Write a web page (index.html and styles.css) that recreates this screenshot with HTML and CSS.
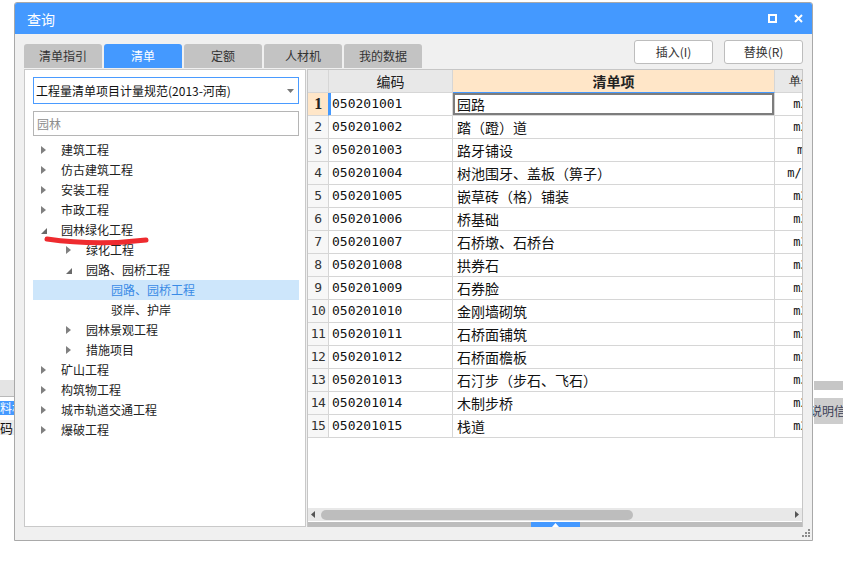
FILE: index.html
```html
<!DOCTYPE html>
<html lang="zh">
<head>
<meta charset="utf-8">
<title>查询</title>
<link rel="stylesheet" href="styles.css">
</head>
<body>
<div class="bgwin bg-left">
  <div class="bgl-bar"></div>
  <div class="bgl-tab">材料机</div>
  <div class="bgl-row">码</div>
</div>
<div class="bgwin bg-right">
  <div class="bgr-bar"></div>
  <div class="bgr-tab">说明信息</div>
</div>

<div class="window">
  <div class="titlebar">
    <span class="title">查询</span>
    <div class="tb-icons">
      <svg width="9" height="9" viewBox="0 0 9 9"><rect x="1" y="1" width="7" height="7" fill="none" stroke="#fff" stroke-width="2"/></svg>
      <svg width="9" height="9" viewBox="0 0 9 9"><path d="M1 1L8 8M8 1L1 8" stroke="#fff" stroke-width="2"/></svg>
    </div>
  </div>
  <div class="toolbar">
    <div class="tabs">
      <div class="tab">清单指引</div>
      <div class="tab active">清单</div>
      <div class="tab">定额</div>
      <div class="tab">人材机</div>
      <div class="tab">我的数据</div>
    </div>
    <div class="actions">
      <button class="btn">插入(I)</button>
      <button class="btn">替换(R)</button>
    </div>
  </div>
  <div class="main">
    <div class="leftpanel">
      <div class="select">
        <span>工程量清单项目计量规范(2013-河南)</span>
        <svg class="caret" width="7" height="4" viewBox="0 0 7 4"><path d="M0 0H7L3.5 4Z" fill="#777"/></svg>
      </div>
      <div class="search">园林</div>
      <div class="tree">
        <div class="node l0"><span class="tw closed"></span>建筑工程</div>
        <div class="node l0"><span class="tw closed"></span>仿古建筑工程</div>
        <div class="node l0"><span class="tw closed"></span>安装工程</div>
        <div class="node l0"><span class="tw closed"></span>市政工程</div>
        <div class="node l0"><span class="tw open"></span>园林绿化工程</div>
        <div class="node l1"><span class="tw closed"></span>绿化工程</div>
        <div class="node l1"><span class="tw open"></span>园路、园桥工程</div>
        <div class="node l2 selected"><span class="tw"></span>园路、园桥工程</div>
        <div class="node l2"><span class="tw"></span>驳岸、护岸</div>
        <div class="node l1"><span class="tw closed"></span>园林景观工程</div>
        <div class="node l1"><span class="tw closed"></span>措施项目</div>
        <div class="node l0"><span class="tw closed"></span>矿山工程</div>
        <div class="node l0"><span class="tw closed"></span>构筑物工程</div>
        <div class="node l0"><span class="tw closed"></span>城市轨道交通工程</div>
        <div class="node l0"><span class="tw closed"></span>爆破工程</div>
      </div>
    </div>
    <div class="grid">
      <div class="gview">
        <div class="grow head">
          <div class="c rn"></div>
          <div class="c hc">编码</div>
          <div class="c hc hname">清单项</div>
          <div class="c hc unit">单位</div>
        </div>
        <div class="grow cur">
          <div class="c rn">1</div><div class="c code">050201001</div><div class="c name sel">园路</div><div class="c unit">m2</div>
        </div>
        <div class="grow">
          <div class="c rn">2</div><div class="c code">050201002</div><div class="c name">踏（蹬）道</div><div class="c unit">m2</div>
        </div>
        <div class="grow">
          <div class="c rn">3</div><div class="c code">050201003</div><div class="c name">路牙铺设</div><div class="c unit">m</div>
        </div>
        <div class="grow">
          <div class="c rn">4</div><div class="c code">050201004</div><div class="c name">树池围牙、盖板（箅子）</div><div class="c unit">m/个</div>
        </div>
        <div class="grow">
          <div class="c rn">5</div><div class="c code">050201005</div><div class="c name">嵌草砖（格）铺装</div><div class="c unit">m2</div>
        </div>
        <div class="grow">
          <div class="c rn">6</div><div class="c code">050201006</div><div class="c name">桥基础</div><div class="c unit">m3</div>
        </div>
        <div class="grow">
          <div class="c rn">7</div><div class="c code">050201007</div><div class="c name">石桥墩、石桥台</div><div class="c unit">m3</div>
        </div>
        <div class="grow">
          <div class="c rn">8</div><div class="c code">050201008</div><div class="c name">拱券石</div><div class="c unit">m3</div>
        </div>
        <div class="grow">
          <div class="c rn">9</div><div class="c code">050201009</div><div class="c name">石券脸</div><div class="c unit">m2</div>
        </div>
        <div class="grow">
          <div class="c rn">10</div><div class="c code">050201010</div><div class="c name">金刚墙砌筑</div><div class="c unit">m3</div>
        </div>
        <div class="grow">
          <div class="c rn">11</div><div class="c code">050201011</div><div class="c name">石桥面铺筑</div><div class="c unit">m2</div>
        </div>
        <div class="grow">
          <div class="c rn">12</div><div class="c code">050201012</div><div class="c name">石桥面檐板</div><div class="c unit">m2</div>
        </div>
        <div class="grow">
          <div class="c rn">13</div><div class="c code">050201013</div><div class="c name">石汀步（步石、飞石）</div><div class="c unit">m3</div>
        </div>
        <div class="grow">
          <div class="c rn">14</div><div class="c code">050201014</div><div class="c name">木制步桥</div><div class="c unit">m2</div>
        </div>
        <div class="grow">
          <div class="c rn">15</div><div class="c code">050201015</div><div class="c name">栈道</div><div class="c unit">m2</div>
        </div>
      </div>
      <div class="hscroll">
        <svg width="4" height="7" viewBox="0 0 4 7"><path d="M4 0V7L0 3.5Z" fill="#555"/></svg>
        <div class="thumb"></div>
        <svg width="4" height="7" viewBox="0 0 4 7"><path d="M0 0V7L4 3.5Z" fill="#555"/></svg>
      </div>
      <div class="splitter">
        <div class="handle">
          <svg width="7" height="4" viewBox="0 0 7 4"><path d="M0 4H7L3.5 0Z" fill="#fff"/></svg>
        </div>
      </div>
    </div>
  </div>
  <div class="statusbar">
    <svg class="grip" width="9" height="9" viewBox="0 0 9 9" fill="#8c8c8c">
      <rect x="6" y="0" width="2" height="2"/>
      <rect x="3" y="3" width="2" height="2"/><rect x="6" y="3" width="2" height="2"/>
      <rect x="0" y="6" width="2" height="2"/><rect x="3" y="6" width="2" height="2"/><rect x="6" y="6" width="2" height="2"/>
    </svg>
  </div>
</div>

<svg class="annot" width="843" height="572" viewBox="0 0 843 572">
  <path d="M47 239 Q96 246 146 240" fill="none" stroke="#ee2b2f" stroke-width="5" stroke-linecap="round"/>
</svg>
</body>
</html>
```
FILE: styles.css
```css
* { box-sizing: border-box; margin: 0; padding: 0; }
html, body { width: 843px; height: 572px; overflow: hidden; background: #fff; }
body {
  position: relative;
  font-family: "Noto Sans CJK SC", "Liberation Sans", sans-serif;
  font-size: 12px;
  color: #222;
}

/* windows behind */
.bgwin { position: absolute; overflow: hidden; }
.bg-left { left: 0; top: 378px; width: 14px; height: 60px; }
.bgl-bar { height: 17px; margin-top: 2px; background: #e4e4e4; border-bottom: 1px solid #b9b9b9; }
.bgl-tab {
  height: 14px; margin-top: 4px; background: #4499ff; color: #fff;
  line-height: 14px; white-space: nowrap; margin-left: -12px; padding-left: 0;
}
.bgl-row {
  height: 15px; margin-top: 5px; background: #ececec; color: #111;
  line-height: 15px; font-size: 13px;
}
.bg-right { left: 813px; top: 381px; width: 30px; height: 46px; }
.bgr-bar { height: 9px; background: #c6c6c6; margin-left: 1px; }
.bgr-tab {
  height: 26px; margin-top: 8px; background: #cdcdcd; color: #3b3f55;
  line-height: 26px; white-space: nowrap; text-indent: -4px; margin-left: 1px;
}

/* window */
.window {
  position: absolute; left: 14px; top: 2px; width: 799px; height: 539px;
  border: 1px solid #a9a9a9; border-radius: 3px 3px 0 0;
  background: #f0f0f0; display: flex; flex-direction: column;
}
.titlebar {
  height: 31px; background: #4499ff; color: #fff;
  display: flex; align-items: center; justify-content: space-between;
  padding: 0 9px 0 12px; border-radius: 2px 2px 0 0;
}
.title { font-size: 14px; line-height: 20px; }
.tb-icons { display: flex; gap: 17px; align-items: center; }
.tb-icons svg { display: block; }

.toolbar { height: 35px; display: flex; justify-content: space-between; padding: 0 9px; }
.tabs { display: flex; gap: 2px; align-self: flex-end; margin-bottom: 1px; }
.tab {
  width: 78px; height: 24px; background: #c3c3c3; color: #333;
  border-radius: 3px 3px 0 0;
  display: flex; align-items: center; justify-content: center; line-height: 1;
}
.tab.active { background: #4499ff; color: #fff; }
.actions { display: flex; gap: 11px; padding-top: 6px; }
.btn {
  width: 79px; height: 24px; border: 1px solid #bdbdbd; border-radius: 3px;
  background: #fff; color: #333; font: inherit; line-height: 1;
  display: flex; align-items: center; justify-content: center;
}

.main { height: 458px; display: flex; gap: 1px; padding: 0 9px; }

/* left panel */
.leftpanel {
  width: 282px; background: #fff; border: 1px solid #c9c9c9;
  padding: 7px 6px 0 8px;
}
.select {
  height: 27px; border: 1px solid #4a9bff; background: #fff;
  display: flex; align-items: center; justify-content: space-between;
  padding: 0 4px 0 2px; color: #111; white-space: nowrap;
}
.caret { display: block; }
.search {
  margin-top: 7px; height: 25px; border: 1px solid #b5b5b5;
  padding-left: 3px; line-height: 23px; color: #8d8d8d;
}
.tree { margin-top: 4px; }
.node { height: 20px; display: flex; align-items: center; padding-left: 8px; color: #222; white-space: nowrap; line-height: 20px; }
.node.l1 { padding-left: 33px; }
.node.l2 { padding-left: 58px; }
.node.selected { background: #cde6fb; color: #3a8be6; }
.tw { width: 20px; height: 20px; flex: none; position: relative; }
.tw.closed::before {
  content: ""; position: absolute; left: 0; top: 6px;
  border-left: 5px solid #808080; border-top: 4px solid transparent; border-bottom: 4px solid transparent;
}
.tw.open::before {
  content: ""; position: absolute; left: 0; top: 8px;
  border-right: 6px solid #6a6a6a; border-top: 6px solid transparent;
}

/* grid */
.grid {
  width: 496px; background: #fff; border: 1px solid #c6c6c6; border-bottom: 0;
  display: flex; flex-direction: column; overflow: hidden;
}
.gview { flex: 1; overflow: hidden; }
.grow { display: grid; grid-template-columns: 21px 124px 322px 52px; height: 23px; }
.c {
  border-right: 1px solid #d6d6d6; border-bottom: 1px solid #d6d6d6;
  line-height: 22px; white-space: nowrap; overflow: hidden; color: #111;
}
.rn {
  background: #f7f7f7; text-align: center; color: #333;
  font-family: "DejaVu Sans Mono", monospace; font-size: 13px; letter-spacing: -0.5px;
}
.head .c { background: #e8e8e8; }
.hc { text-align: center; font-size: 14px; color: #222; }
.head .hname { background: #ffe6c8; font-weight: bold; border-bottom: 1px solid #4499ff; }
.code { font-family: "DejaVu Sans Mono", monospace; font-size: 13px; padding-left: 3px; }
.name { font-size: 14px; padding-left: 4px; }
.unit { text-align: center; font-family: "DejaVu Sans Mono", monospace; font-size: 12px; }
.cur .rn { background: #ffe6c8; border-right: 1px solid #4499ff; font-weight: bold; font-family: "Liberation Serif", serif; font-size: 16px; color: #222; }
.cur .code { box-shadow: inset 2px 0 0 #4499ff; }
.name.sel { box-shadow: inset 0 0 0 2px #7d7d7d; }

.hscroll {
  height: 13px; background: #e8e8e8;
  display: flex; align-items: center; padding: 0 3px 0 3px;
}
.hscroll svg { display: block; flex: none; }
.thumb { width: 312px; height: 10px; border-radius: 5px; background: #bdbdbd; margin-left: 6px; margin-right: auto; }
.splitter {
  height: 5px; margin-top: 1px; background: #bdbdbd;
  display: flex; justify-content: center;
}
.handle { width: 49px; height: 5px; background: #4499ff; display: flex; align-items: center; justify-content: center; }
.handle svg { display: block; }

.statusbar { flex: 1; display: flex; justify-content: flex-end; align-items: flex-end; padding: 0 1px 2px 0; }
.grip { display: block; }

.annot { position: absolute; left: 0; top: 0; pointer-events: none; }
```
